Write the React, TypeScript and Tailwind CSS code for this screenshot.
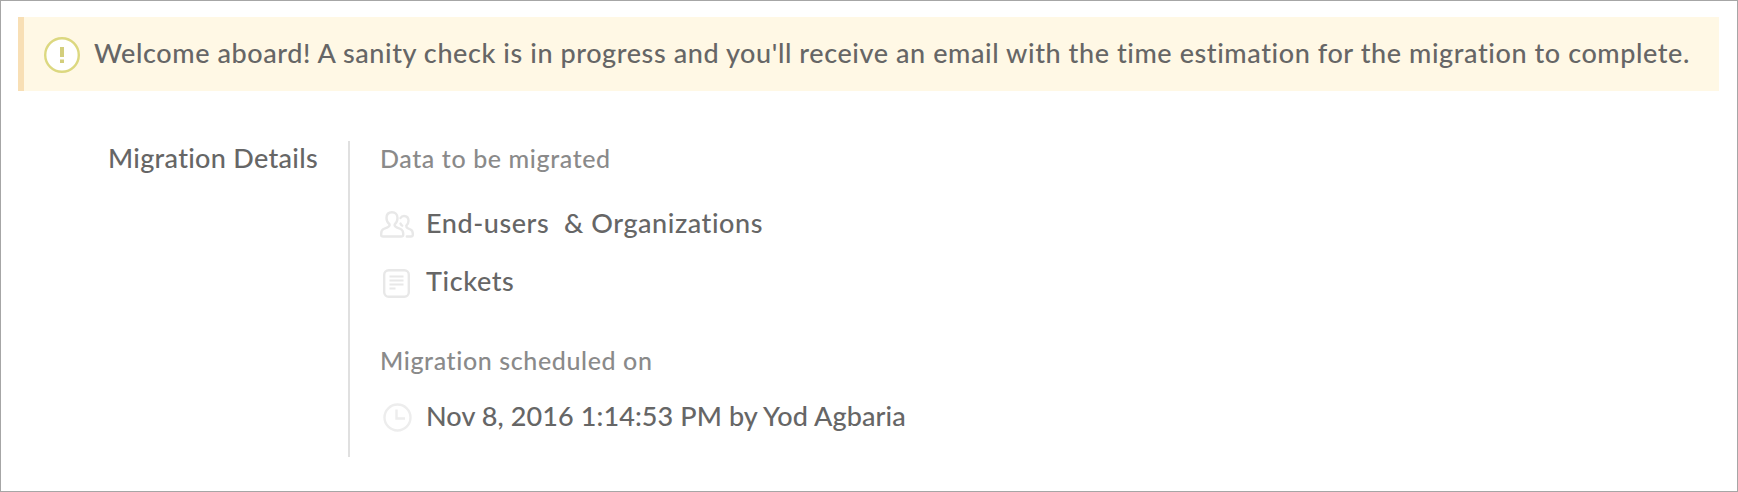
const BANNER_TEXT =
  "Welcome aboard! A sanity check is in progress and you'll receive an email with the time estimation for the migration to complete.";

function AlertIcon() {
  return (
    <svg className="w-9 h-9 shrink-0" viewBox="0 0 36 36" fill="none">
      <circle cx="18" cy="18" r="16.800" fill="#fff" stroke="#dcd880" strokeWidth="2.400" />
      <path d="M18 10v10M18 22.500v3.500" stroke="#d3ce7c" strokeWidth="4" />
    </svg>
  );
}

function UsersIcon() {
  return (
    <svg className="w-[34px] h-[27px]" viewBox="0 0 34 27" fill="none" stroke="#e8e8e8" strokeWidth="2.400" strokeLinecap="round" strokeLinejoin="round">
      <path d="M12 1.200C8.600 1.200 6.500 3.500 6.500 7c0 3 1.300 5 3 6.300.4 1.700-.5 2.400-2 3L3.500 18C1.900 18.900 1.200 20.500 1.200 22.500V24c0 1 .8 1.500 2 1.500h18c1.300 0 2-.5 2-1.500v-1.500c0-2-.8-3.600-2.600-4.500l-4-1.700c-1.500-.6-2.300-1.300-1.900-3C16.200 12 17.500 10 17.500 7c0-3.500-2.100-5.800-5.500-5.800z" />
      <path d="M20.500 7c.8-1.400 2-2 3.500-2 2.800 0 4.500 2 4.500 4.800 0 2.200-.9 3.700-2.200 4.800-.2 1.500.3 2 1.500 2.600l2.700 1.300c1.700.8 2.300 2.200 2.300 4.200v1c0 1.200-.7 1.800-2 1.800h-4M20.500 12.500c.4.900 1 1.600 1.700 2.200" />
    </svg>
  );
}

function TicketIcon() {
  return (
    <svg className="w-[27px] h-[29px]" viewBox="0 0 27 29" fill="none" stroke="#e8e8e8" strokeWidth="2.400">
      <rect x="1.200" y="1.200" width="24.600" height="26.600" rx="4.500" />
      <path d="M6.500 7.500h14M6.500 11.500h14M6.500 15.500h14M6.500 19.500h6" strokeWidth="2" />
    </svg>
  );
}

function ClockIcon() {
  return (
    <svg className="w-[29px] h-[29px]" viewBox="0 0 29 29" fill="none" stroke="#ededed" strokeWidth="2.400">
      <circle cx="14.500" cy="14.500" r="13" />
      <path d="M13.500 6.500v9h8.500" />
    </svg>
  );
}

export default function App() {
  return (
    <div className="w-[1738px] h-[492px] border border-[#a6a6a6] bg-white pt-4 pl-[17px] pr-[18px] font-['Lato',sans-serif] font-medium text-[27px] leading-8 text-[#666] whitespace-pre">
      {/* Status banner */}
      <div className="flex h-[74px] border-l-6 border-[#f8dfb5] bg-[#fff8e5] pl-5">
        <div className="pt-5">
          <AlertIcon />
        </div>
        <p className="ml-[14px] pt-5 tracking-[0.586px]">{BANNER_TEXT}</p>
      </div>

      {/* Details */}
      <div className="mt-[50px] flex h-[316px]">
        <h2 className="w-[330px] pl-[90px] pt-px tracking-[0.300px]">Migration Details</h2>
        <div className="border-l-2 border-[#e0e0e0] pl-[30px]">
          <h3 className="pt-px text-[25px] text-[#8a8a8a] tracking-[0.600px]">Data to be migrated</h3>
          <div className="mt-[33px] flex">
            <div className="w-[46px] pt-[4px]">
              <UsersIcon />
            </div>
            <span className="tracking-[0.560px]">{'End-users  & Organizations'}</span>
          </div>
          <div className="mt-[26px] flex">
            <div className="w-[46px] pl-[3px] pt-[4px]">
              <TicketIcon />
            </div>
            <span className="tracking-[0.600px]">Tickets</span>
          </div>
          <h3 className="mt-[46px] text-[25px] text-[#8a8a8a] tracking-[0.610px]">Migration scheduled on</h3>
          <div className="mt-6 flex">
            <div className="w-[46px] pl-[3px] pt-[3px]">
              <ClockIcon />
            </div>
            <span className="tracking-[0.100px]">Nov 8, 2016 1:14:53 PM by Yod Agbaria</span>
          </div>
        </div>
      </div>
    </div>
  );
}
